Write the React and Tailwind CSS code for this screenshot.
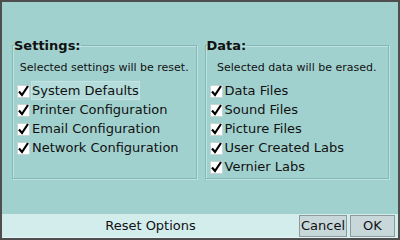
import React from 'react';

const settings = ['System Defaults', 'Printer Configuration', 'Email Configuration', 'Network Configuration'];
const data = ['Data Files', 'Sound Files', 'Picture Files', 'User Created Labs', 'Vernier Labs'];

function Check() {
  return (
    <svg width="13" height="14" viewBox="0 0 13 14" className="shrink-0">
      <rect x="0.5" y="1.5" width="12" height="12" fill="#ffffff" stroke="#c8d4d4" />
      <path d="M2 7.5 L5 11 L11 2" fill="none" stroke="#000000" strokeWidth="2.2" />
    </svg>
  );
}

function Group({ title, note, items, focused }) {
  return (
    <fieldset className="min-w-0 flex-1 border border-[#84b9b8] pl-[1px] shadow-[inset_1px_1px_0_#bfe2e1,1px_1px_0_#bfe2e1]">
      <legend className="text-[13px] leading-[15px] font-bold text-[#111]">{title}</legend>
      <div className="whitespace-nowrap pt-[9px] pr-[1px] text-center text-[11px] leading-[12px] text-[#111]">{note}</div>
      <div className="mt-[7px] flex flex-col">
        {items.map((item, i) => (
          <div key={item} className="flex h-[19px] items-center gap-[1px] pl-[3px]">
            <Check />
            <span
              className={
                focused && i === 0
                  ? 'whitespace-nowrap border border-[#c4e3e2] bg-[#b3dcdb] text-[13px] leading-[17px] text-[#111]'
                  : 'whitespace-nowrap border border-transparent text-[13px] leading-[17px] text-[#111]'
              }
            >
              {item}
            </span>
          </div>
        ))}
      </div>
    </fieldset>
  );
}

export default function App() {
  return (
    <div
      className="flex h-[240px] w-[400px] flex-col border-2 border-[#4e4e4e] bg-[#a1d1cf]"
      style={{ fontFamily: '"DejaVu Sans", sans-serif' }}
    >
      <div className="flex min-h-0 flex-1 gap-2 pl-[10px] pr-[9px] pt-[36px] pb-[35px]">
        <Group title="Settings:" note="Selected settings will be reset." items={settings} focused />
        <Group title="Data:" note="Selected data will be erased." items={data} />
      </div>
      <div className="flex h-[24px] shrink-0 items-center border-b border-[#e4f5f5] bg-[#d3eded] pr-[3px]">
        <div className="flex-1 text-center text-[13px] text-[#111]">Reset Options</div>
        <button className="mr-[3px] h-[22px] w-[48px] border border-[#8c9a9d] bg-[#c8d7da] text-[13px] text-[#111]">Cancel</button>
        <button className="h-[22px] w-[45px] border border-[#8c9a9d] bg-[#c8d7da] text-[13px] text-[#111]">OK</button>
      </div>
    </div>
  );
}
